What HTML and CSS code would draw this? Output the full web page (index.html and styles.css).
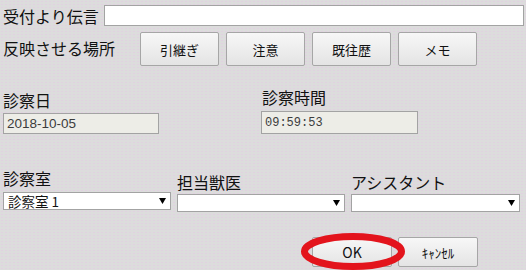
FILE: index.html
```html
<!DOCTYPE html>
<html lang="ja">
<head>
<meta charset="utf-8">
<link rel="stylesheet" href="styles.css">
</head>
<body>
<div class="page">
  <div class="row row-msg">
    <span class="lbl lbl-msg">受付より伝言</span>
    <input class="txt msg" type="text">
  </div>
  <div class="row row-place">
    <span class="lbl lbl-place">反映させる場所</span>
    <div class="btns">
      <button class="btn">引継ぎ</button>
      <button class="btn">注意</button>
      <button class="btn">既往歴</button>
      <button class="btn">メモ</button>
    </div>
  </div>
  <div class="row row-date">
    <div class="field f-date">
      <span class="lbl">診察日</span>
      <input class="txt ro date" type="text" value="2018-10-05" readonly>
    </div>
    <div class="field f-time">
      <span class="lbl">診察時間</span>
      <input class="txt ro time" type="text" value="09:59:53" readonly>
    </div>
  </div>
  <div class="row row-sel">
    <div class="field f-room">
      <span class="lbl">診察室</span>
      <div class="sel"><span class="sel-val">診察室 1</span><svg class="arrow" width="7" height="6" viewBox="0 0 7 6"><polygon points="0,0 7,0 3.5,6" fill="#000"/></svg></div>
    </div>
    <div class="field f-vet">
      <span class="lbl">担当獣医</span>
      <div class="sel"><span class="sel-val"></span><svg class="arrow" width="7" height="6" viewBox="0 0 7 6"><polygon points="0,0 7,0 3.5,6" fill="#000"/></svg></div>
    </div>
    <div class="field f-asst">
      <span class="lbl">アシスタント</span>
      <div class="sel"><span class="sel-val"></span><svg class="arrow" width="7" height="6" viewBox="0 0 7 6"><polygon points="0,0 7,0 3.5,6" fill="#000"/></svg></div>
    </div>
  </div>
  <div class="row row-actions">
    <div class="ok-wrap">
      <button class="btn act">OK</button>
      <svg class="circle" width="108" height="40" viewBox="0 0 108 40"><ellipse cx="54" cy="19.5" rx="48.5" ry="15" fill="none" stroke="#e3141c" stroke-width="7"/></svg>
    </div>
    <button class="btn act cancel">ｷｬﾝｾﾙ</button>
  </div>
</div>
</body>
</html>
```
FILE: styles.css
```css
html, body {
  margin: 0;
  padding: 0;
}
body {
  background-color: #dcdcdc;
  background-image: radial-gradient(circle, rgba(230, 200, 230, 0.55) 0.6px, transparent 0.9px);
  background-size: 4px 3px;
  font-family: "Noto Sans CJK JP", "Noto Sans", sans-serif;
  color: #111;
  width: 526px;
  height: 270px;
  overflow: hidden;
}
.page {
  padding: 5px 0 0 3px;
}
.row {
  display: flex;
}
.lbl {
  font-size: 16px;
  line-height: 20px;
  color: #111;
  white-space: nowrap;
}
.row-msg {
  align-items: center;
  height: 21px;
}
.lbl-msg {
  width: 101px;
}
.txt {
  box-sizing: border-box;
  margin: 0;
  border: 1px solid #a3a3a3;
  background: #fff;
  outline: none;
  padding: 0 3px;
}
.msg {
  width: 420px;
  height: 21px;
}
.row-place {
  margin-top: 6px;
  align-items: center;
  height: 34px;
}
.lbl-place {
  width: 137px;
  position: relative;
  top: -1px;
}
.btns {
  display: flex;
  gap: 7px;
}
.btn {
  box-sizing: border-box;
  width: 79px;
  height: 34px;
  margin: 0;
  padding: 0;
  border: 1px solid #a6a6a6;
  border-radius: 2px;
  background: linear-gradient(#f7f7f7, #e4e4e4);
  font-family: "Noto Sans CJK JP", "Noto Sans", sans-serif;
  font-size: 13px;
  color: #111;
}
.field {
  display: flex;
  flex-direction: column;
}
.f-date {
  width: 258px;
  padding-top: 24px;
}
.f-date .lbl {
  margin-bottom: 3px;
}
.f-time {
  padding-top: 21px;
}
.f-time .lbl {
  margin-bottom: 4px;
  margin-left: 1px;
}
.ro {
  background: #edede7;
  color: #3c3c3c;
}
.date {
  width: 156px;
  height: 21px;
  font-family: "Liberation Sans", Arial, sans-serif;
  font-size: 13.5px;
  padding-left: 3px;
}
.time {
  width: 157px;
  height: 23px;
  font-family: "Liberation Mono", monospace;
  font-size: 12px;
  padding-left: 3px;
}
.row-sel {
  gap: 6px;
}
.f-room {
  width: 168px;
  padding-top: 34px;
}
.f-room .lbl {
  margin-bottom: 4px;
}
.f-vet {
  width: 168px;
  padding-top: 38px;
}
.f-asst {
  width: 169px;
  padding-top: 38px;
}
.f-vet .lbl, .f-asst .lbl {
  margin-bottom: 2px;
}
.sel {
  box-sizing: border-box;
  height: 18px;
  border: 1px solid #a3a3a3;
  background: #fff;
  display: flex;
  align-items: center;
  justify-content: space-between;
  padding: 0 4px 0 4px;
}
.sel-val {
  font-size: 13.5px;
  line-height: 16px;
  color: #111;
}
.arrow {
  display: block;
  flex: none;
}
.row-actions {
  margin-top: 25px;
  padding-left: 309px;
  gap: 6px;
  align-items: flex-start;
}
.ok-wrap {
  position: relative;
}
.act {
  width: 80px;
  height: 30px;
  font-size: 14px;
}
.cancel {
  font-size: 13px;
}
.circle {
  position: absolute;
  left: -13px;
  top: -5px;
  pointer-events: none;
}
```
